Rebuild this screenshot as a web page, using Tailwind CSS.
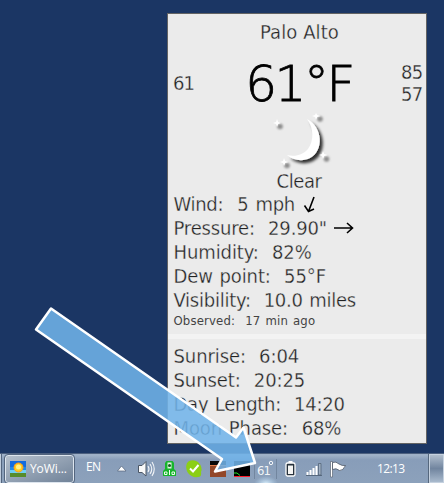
<!DOCTYPE html>
<html lang="en">

<head>
    <meta charset="utf-8" />
    <meta content="width=device-width, initial-scale=1.0" name="viewport" />
    <title>YoWindow</title>
    <script src="https://cdn.jsdelivr.net/npm/@tailwindcss/browser@4"></script>
</head>

<body class="relative w-[444px] h-[483px] overflow-hidden bg-[#1b3664] flex flex-col">

    <!-- Weather panel -->
    <div class="mt-[13px] ml-[167px] w-[260px] h-[431px] shrink-0 border border-[#636363] bg-[#ebebeb] text-[#222] text-[20px] leading-[24px] font-['DejaVu_Sans_Condensed','DejaVu_Sans',sans-serif] [-webkit-text-stroke:0.3px_#ebebeb]">
        <div class="h-[36px] pt-[6px] pl-[5px] text-center tracking-[0.1px]">Palo Alto</div>
        <div class="h-[66px] pl-[5px] pr-[2px] flex items-center justify-between">
            <span class="w-[26px] pb-[1px] tracking-[-1px]">61</span>
            <span class="text-[50px] leading-[50px] pt-[2px] pr-[2px] text-black font-[200] font-['DejaVu_Sans',sans-serif] tracking-[-2.5px] [-webkit-text-stroke:0.8px_#000]">61°F</span>
            <span class="w-[23px] leading-[22px] tracking-[-0.6px] pb-[1px]">85<br>57</span>
        </div>
        <div class="h-[53px] flex justify-center">
            <svg class="w-[80px] h-[60px] ml-[7px] -mt-[4px]" viewBox="260 112 80 60">
                <defs>
                    <filter id="soft" x="-30%" y="-30%" width="160%" height="160%">
                        <feDropShadow dx="3" dy="3" stdDeviation="1.6" flood-color="#000" flood-opacity="0.8" />
                    </filter>
                    <filter id="dot" x="-60%" y="-60%" width="220%" height="220%">
                        <feGaussianBlur stdDeviation="0.8" />
                    </filter>
                </defs>
                <path filter="url(#soft)" fill="#fff" d="M306 119C322 127 323 151 309 158C301 162 292 160 286 155C294 157 302 155 307 149C313 141 313 128 306 119Z" />
                <g fill="#8c8c8c">
                    <circle filter="url(#dot)" cx="279" cy="126.500" r="2.800" />
                    <circle filter="url(#dot)" cx="319" cy="119" r="2.800" />
                    <circle filter="url(#dot)" cx="325.500" cy="159" r="2.800" />
                    <circle filter="url(#dot)" cx="286" cy="165.500" r="2.800" />
                </g>
                <g fill="#fff">
                    <path d="M276 119L277.200 122L280 123L277.200 124L276 127L275 124L272 123L275 122Z" />
                    <path d="M315 113L316.200 115L320 116L316.200 117L315 120L314 117L311 116L314 115Z" />
                    <path d="M322 151L323.200 154L327 155L323.200 156L322 159L321 156L318 155L321 154Z" />
                    <path d="M283 158L284.200 161L288 162L284.200 163L283 166L282 163L279 162L282 161Z" />
                </g>
            </svg>
        </div>
        <div class="h-[23px] text-center pl-[4px] tracking-[-0.4px]">Clear</div>
        <div class="px-[5.5px] whitespace-nowrap">
            <div class="flex items-center h-[24px]"><span class="whitespace-pre tracking-[-0.3px] [word-spacing:1.6px]">Wind:  5 mph</span>
                <svg class="size-[20px] ml-[7px]" viewBox="0 0 20 20" fill="none" stroke="#000" stroke-width="1.6"><path d="M12 3L6.500 17.500M2.500 11.500L6.500 17.500L12 15" /></svg></div>
            <div class="flex items-center h-[24px]"><span class="whitespace-pre tracking-[-0.15px] [word-spacing:1px]">Pressure:  29.90"</span>
                <svg class="w-[20px] h-[12px] ml-[7px]" viewBox="0 0 20 12" fill="none" stroke="#000" stroke-width="1.6"><path d="M0 6H18M13 1L18.500 6L13 11" /></svg></div>
            <div class="h-[24px] whitespace-pre tracking-[-0.1px] [word-spacing:1px]">Humidity:  82%</div>
            <div class="h-[24px] whitespace-pre tracking-[-0.1px] [word-spacing:1px]">Dew point:  55°F</div>
            <div class="h-[24px] whitespace-pre tracking-[-0.25px] [word-spacing:1px]">Visibility:  10.0 miles</div>
            <div class="h-[17px] whitespace-pre text-[13px] leading-[17px] tracking-[0.15px] [word-spacing:1.2px] text-[#444] [-webkit-text-stroke:0]">Observed:  17 min ago</div>
        </div>
        <div class="h-[5px] mt-[5px] bg-[#f3f3f3]"></div>
        <div class="px-[5.5px] pt-[5px] whitespace-nowrap">
            <div class="whitespace-pre tracking-[-0.1px] [word-spacing:1px]">Sunrise:  6:04</div>
            <div class="whitespace-pre tracking-[-0.1px] [word-spacing:1px]">Sunset:  20:25</div>
            <div class="whitespace-pre tracking-[-0.25px] [word-spacing:1px]">Day Length:  14:20</div>
            <div class="whitespace-pre tracking-[-0.1px] [word-spacing:1.2px]">Moon Phase:  68%</div>
        </div>
    </div>

    <!-- Taskbar -->
    <div class="mt-[9px] h-[30px] overflow-hidden border-t border-[#4c607f] bg-linear-to-b from-[#9eb0c7] from-5% via-[#889db9] via-20% to-[#8ca1bb] flex items-center text-white font-['Open_Sans',sans-serif]">
        <div class="w-[2px] h-[29px] bg-[#c0cddd] border-r border-[#53657e]"></div>
        <div class="ml-[3px] w-[69px] h-[28px] rounded-[3px] border border-[#dde5ee] outline outline-[#53657e] bg-linear-to-br from-[#b5c0cd] to-[#718399] flex items-center pl-[4px]">
            <svg class="size-[16px]" viewBox="0 0 16 16">
                <rect width="16" height="9" fill="#126be0" />
                <path d="M0 6H16V9H0Z" fill="#1c8aee" />
                <path d="M0 9H16V12H0Z" fill="#6fd0f5" />
                <path d="M0 12H16V16H0Z" fill="#568c2b" />
                <circle cx="8.500" cy="6.500" r="4.500" fill="#ffcb20" stroke="#ff9b18" />
                <circle cx="8.500" cy="6" r="2.500" fill="#fff187" />
            </svg>
            <span class="ml-[4px] text-[12px] leading-[16px] tracking-[-0.1px]">YoWi...</span>
        </div>
        <span class="ml-[12px] w-[16px] pb-[4px] text-[12px] leading-[16px] tracking-[-0.6px]">EN</span>
        <!-- Tray icons -->
        <svg class="w-[244px] h-[29px] shrink-0" viewBox="102 454 244 29">
            <path d="M117.500 471L121.500 466L126 471Z" fill="#fff" stroke="#53637a" stroke-width=".7" />
            <path d="M138.500 465.500H142L146 461.500V476L142 472.500H138.500Z" fill="#f9f9f9" stroke="#4b5665" />
            <path d="M148 466Q150 469 148 472M150 464Q153.500 469 150 474M152 462Q156.500 469 152 476" fill="none" stroke="#f3f5f8" stroke-width="1.100" />
            <path d="M166.500 461H172.500L174 463V469L176 471V476H163V471L165 469V463Z" fill="#17b52c" />
            <path d="M167.500 462.500H171.500V468.500H167.500Z" fill="#dff5df" />
            <circle cx="169.500" cy="465.500" r="1.500" fill="#1a5c24" />
            <path d="M164.500 472H167V474.500H164.500ZM172 472H174.500V474.500H172ZM169.500 470V475" fill="none" stroke="#efffed" />
            <path d="M189 461Q194 459 198 462Q203 467 201 472Q202 477 198 477Q192 478 188 473Q185 468 187 463Z" fill="#8bcf16" />
            <path d="M190 468.500L193 471.500L198.500 465" fill="none" stroke="#fff" stroke-width="2" />
            <path d="M210 461H226V477H210Z" fill="#934728" />
            <path d="M210 461H226V465H210Z" fill="#090909" />
            <path d="M210 465.500H226" stroke="#e17a45" />
            <path d="M234 461H250V477H234Z" fill="#000" />
            <path d="M234 473H237L240 475.500" fill="none" stroke="#23e626" />
            <path d="M234 476.500H250" stroke="#ff1c2b" />
            <defs>
                <radialGradient id="glow"><stop offset="0" stop-color="#e0f4ff" /><stop offset="1" stop-color="#b5d7f3" stop-opacity="0" /></radialGradient>
            </defs>
            <ellipse cx="266" cy="484" rx="12" ry="8" fill="url(#glow)" />
            <text x="257" y="475" font-family="DejaVu Sans Condensed" font-size="13" textLength="14" fill="#fff" fill-opacity=".9">61</text>
            <circle cx="271" cy="463" r="1.700" fill="none" stroke="#fff" stroke-width=".9" />
            <path d="M254.500 459V479M276.500 459V479" stroke="#72869f" />
            <rect x="286" y="463" width="9" height="13" rx="1.500" fill="#27323d" stroke="#fff" stroke-width="1.300" />
            <path d="M288.500 461H292.500V463H288.500Z" fill="#fff" />
            <path d="M288 465.500H293V474H288Z" fill="#f6f6f4" />
            <path d="M307.500 472V475M310.500 470V475M313.500 468V475M316.500 466V475" stroke="#fff" stroke-width="2" />
            <path d="M318.500 463.500H321V475H318.500Z" fill="#9fafc2" stroke="#4b5c70" stroke-width=".7" />
            <path d="M306 475.500H322" stroke="#4b5c70" stroke-width=".8" />
            <path d="M330.500 461.500H332.500V477H330.500Z" fill="#fff" stroke="#4b5665" stroke-width=".6" />
            <path d="M332.500 462.500Q336 461 339 464Q342 466 345.500 465.500Q343 471 339.500 470.500Q336 467.500 332.500 469.500Z" fill="#fff" stroke="#4b5665" stroke-width=".8" />
        </svg>
        <span class="ml-[31px] w-[30px] text-[12px] leading-[16px] tracking-[-0.6px]">12:13</span>
        <div class="ml-[22px] w-[15px] h-[29px] shrink-0 border border-[#c5d1df] outline outline-[#55677d] bg-linear-to-b from-[#b1becd] via-[#71859f] to-[#a9bacd]"></div>
    </div>

    <!-- Pointer arrow -->
    <svg class="absolute inset-0 w-[444px] h-[483px]" viewBox="0 0 444 483">
        <path d="M51 308.500L236 437.500L243.500 427.500L255 463L215 471.500L222 459L36 329.500Z" fill="#71b3e9" fill-opacity=".87" stroke="#fff" stroke-width="2.500" stroke-linejoin="round" />
    </svg>
</body>

</html>
